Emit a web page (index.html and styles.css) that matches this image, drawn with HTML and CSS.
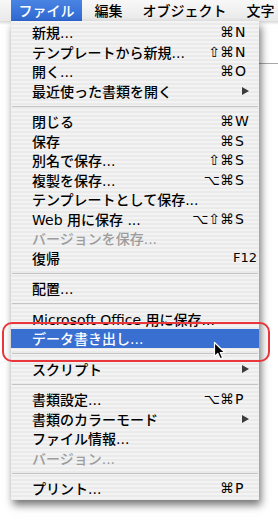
FILE: index.html
```html
<html>
<head><meta http-equiv="Content-Type" content="text/html; charset=utf-8">
<link rel="stylesheet" href="styles.css">
</head>
<body>
<div class="menubar">
  <span class="title open">ファイル</span>
  <span class="title">編集</span>
  <span class="title">オブジェクト</span>
  <span class="title">文字</span>
</div>
<div class="desk">
  <div class="menu">
    <div class="item"><span class="label">新規...</span><span class="mods">⌘</span><span class="key">N</span></div>
    <div class="item"><span class="label">テンプレートから新規...</span><span class="mods">⇧⌘</span><span class="key">N</span></div>
    <div class="item"><span class="label">開く...</span><span class="mods">⌘</span><span class="key">O</span></div>
    <div class="item"><span class="label">最近使った書類を開く</span><span class="mods"></span><span class="key"><i class="sub"></i></span></div>
    <div class="sep"></div>
    <div class="item"><span class="label">閉じる</span><span class="mods">⌘</span><span class="key">W</span></div>
    <div class="item"><span class="label">保存</span><span class="mods">⌘</span><span class="key">S</span></div>
    <div class="item"><span class="label">別名で保存...</span><span class="mods">⇧⌘</span><span class="key">S</span></div>
    <div class="item"><span class="label">複製を保存...</span><span class="mods">⌥⌘</span><span class="key">S</span></div>
    <div class="item"><span class="label">テンプレートとして保存...</span></div>
    <div class="item"><span class="label">Web 用に保存 ...</span><span class="mods">⌥⇧⌘</span><span class="key">S</span></div>
    <div class="item off"><span class="label">バージョンを保存...</span></div>
    <div class="item"><span class="label">復帰</span><span class="mods"></span><span class="key fn">F12</span></div>
    <div class="sep"></div>
    <div class="item"><span class="label">配置...</span></div>
    <div class="sep"></div>
    <div class="item"><span class="label">Microsoft Office 用に保存...</span></div>
    <div class="item hot"><span class="label">データ書き出し...</span></div>
    <div class="sep"></div>
    <div class="item"><span class="label">スクリプト</span><span class="mods"></span><span class="key"><i class="sub"></i></span></div>
    <div class="sep"></div>
    <div class="item"><span class="label">書類設定...</span><span class="mods">⌥⌘</span><span class="key">P</span></div>
    <div class="item"><span class="label">書類のカラーモード</span><span class="mods"></span><span class="key"><i class="sub"></i></span></div>
    <div class="item"><span class="label">ファイル情報...</span></div>
    <div class="item off"><span class="label">バージョン...</span></div>
    <div class="sep"></div>
    <div class="item"><span class="label">プリント...</span><span class="mods">⌘</span><span class="key">P</span></div>
  </div>
  <div class="callout"></div>
  <svg class="pointer" width="14" height="20" viewBox="0 0 14 20">
    <path d="M1.5 1.5 L1.5 15.5 L4.8 12.4 L7.2 17.8 L9.6 16.8 L7.3 11.5 L11.8 11.5 Z" fill="#000" stroke="#fff" stroke-width="1.2" stroke-linejoin="round"/>
  </svg>
</div>
</body>
</html>
```

FILE: styles.css
```css
body {
	margin: 0;
	width: 278px;
	height: 521px;
	overflow: hidden;
	background: #ffffff;
	font-family: "DejaVu Sans", "Noto Sans CJK JP", sans-serif;
	color: #000000;
}

.menubar {
	height: 21px;
	display: flex;
	gap: 5px;
	padding-left: 11px;
	background: linear-gradient(to bottom, #f8f8f8, #e9e9e9);
	font-family: "Noto Sans CJK JP", sans-serif;
	font-size: 14px;
	font-weight: 500;
	line-height: 21px;
}
.title {
	padding: 0 7.5px;
	white-space: nowrap;
}
.title.open {
	background: linear-gradient(to bottom, #4a84e2, #2f68d2);
	color: #ffffff;
}

.desk {
	position: relative;
	height: 500px;
	background: linear-gradient(#a8a8a8, #a8a8a8) no-repeat right 0 top 42px / 19px 1px,
		linear-gradient(to bottom, #d8d8d8, #ffffff 4px);
}

.menu {
	margin-left: 11px;
	width: 248px;
	padding: 1.5px 0 2px;
	background: repeating-linear-gradient(to bottom, #f3f3f3 0 2px, #eaeaea 2px 4px);
	box-shadow: 2px 5px 8px rgba(0, 0, 0, 0.55);
	font-size: 14px;
	font-weight: 500;
}
.item {
	height: 19.5px;
	display: flex;
	align-items: center;
	padding-left: 21px;
	white-space: nowrap;
}
.item .label {
	flex: 1;
}
.item .mods {
	text-align: right;
	margin-right: 1px;
}
.item .key {
	width: 24px;
	position: relative;
}
.item .key.fn {
	margin-left: -2px;
	width: 26px;
	font-size: 13px;
}
.item.off {
	color: #9c9c9c;
}
.item.hot {
	background: #3a6fd2;
	color: #ffffff;
}
.sub {
	display: block;
	width: 0;
	height: 0;
	margin-left: 7px;
	border-left: 7px solid #3c3c3c;
	border-top: 4.5px solid transparent;
	border-bottom: 4.5px solid transparent;
}
.sep {
	height: 11px;
	display: flex;
	align-items: center;
	padding: 0 1px;
}
.sep::before {
	content: "";
	flex: 1;
	height: 1px;
	background: #c4c4c4;
}

.callout {
	position: absolute;
	left: 2px;
	top: 301px;
	width: 268px;
	height: 40px;
	box-sizing: border-box;
	border: 2px solid #e8363a;
	border-radius: 10px;
}
.pointer {
	position: absolute;
	left: 213px;
	top: 320px;
}
```
